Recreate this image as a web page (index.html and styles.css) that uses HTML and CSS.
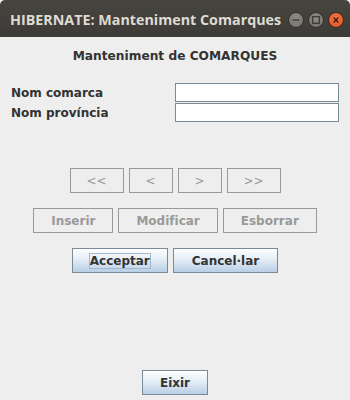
FILE: index.html
```html
<!DOCTYPE html>
<html lang="ca">
<head>
    <meta charset="UTF-8">
    <meta name="viewport" content="width=device-width,initial-scale=1.0">
    <title>HIBERNATE: Manteniment Comarques</title>
    <link rel="stylesheet" href="styles.css">
</head>
<body>
    <div class="window">

        <div class="titlebar">
            <span class="title">HIBERNATE: Manteniment Comarques</span>
            <div class="wmbuttons">
                <span class="wmbtn">
                    <svg width="14" height="14" viewBox="0 0 14 14"><line x1="3.5" y1="7" x2="10.5" y2="7" stroke="#3c3b37" stroke-width="1.4"/></svg>
                </span>
                <span class="wmbtn">
                    <svg width="14" height="14" viewBox="0 0 14 14"><rect x="3.7" y="3.7" width="6.6" height="6.6" fill="none" stroke="#3c3b37" stroke-width="1.3"/></svg>
                </span>
                <span class="wmbtn close">
                    <svg width="14" height="14" viewBox="0 0 14 14"><path d="M4.6 4.6 L9.4 9.4 M9.4 4.6 L4.6 9.4" stroke="#3c1a0e" stroke-width="1.4"/></svg>
                </span>
            </div>
        </div>

        <div class="content">
            <h1>Manteniment de COMARQUES</h1>

            <div class="form">
                <div class="formrow">
                    <label for="comarca">Nom comarca</label>
                    <input type="text" id="comarca">
                </div>
                <div class="formrow">
                    <label for="provincia">Nom província</label>
                    <input type="text" id="provincia">
                </div>
            </div>

            <div class="buttons nav">
                <button class="wide" disabled>&lt;&lt;</button>
                <button disabled>&lt;</button>
                <button disabled>&gt;</button>
                <button class="wide" disabled>&gt;&gt;</button>
            </div>

            <div class="buttons">
                <button disabled>Inserir</button>
                <button disabled>Modificar</button>
                <button disabled>Esborrar</button>
            </div>

            <div class="buttons">
                <button class="active focused"><span class="focus">Acceptar</span></button>
                <button class="active cancel">Cancel·lar</button>
            </div>

            <div class="buttons exit">
                <button class="active">Eixir</button>
            </div>
        </div>

    </div>
</body>
</html>
```

FILE: styles.css
```css
body{
    margin:0;
    background:#f4f4f4;
    font-family:"DejaVu Sans",Verdana,sans-serif;
}

.window{
    width:350px;
    height:400px;
    display:flex;
    flex-direction:column;
}

.titlebar{
    height:37px;
    flex-shrink:0;
    display:flex;
    align-items:center;
    justify-content:space-between;
    padding:0 7px 0 10px;
    background:linear-gradient(#46453f,#3c3b37);
    border-radius:5px 5px 0 0;
}

.title{
    color:#dfdbd2;
    font-family:"Open Sans",sans-serif;
    font-weight:bold;
    font-size:14.3px;
    margin-top:1px;
}

.wmbuttons{
    display:flex;
    gap:6px;
    margin-top:3px;
}

.wmbtn{
    width:14px;
    height:14px;
    border-radius:50%;
    background:radial-gradient(circle at 50% 35%,#8e8c86,#6f6d68);
    box-shadow:0 0 0 1px #35342f;
    display:flex;
}

.wmbtn.close{
    background:radial-gradient(circle at 50% 35%,#f27a4a,#df4a16);
    box-shadow:0 0 0 1px #3a2a22;
}

.content{
    flex:1;
    background:#eeeeee;
    display:flex;
    flex-direction:column;
    padding:12px 0 5px;
    color:#333333;
}

h1{
    margin:0;
    font-size:12.2px;
    line-height:15px;
    text-align:center;
}

.form{
    margin-top:19px;
    padding:0 11px 0 11px;
}

.formrow{
    display:flex;
    justify-content:space-between;
    height:20px;
}

.formrow label{
    font-size:12px;
    font-weight:bold;
    line-height:20px;
}

.formrow input{
    width:164px;
    height:19px;
    box-sizing:border-box;
    margin:0;
    border:1px solid #7a8a99;
    background:white;
    padding:0 3px;
}

.buttons{
    display:flex;
    justify-content:center;
    gap:5px;
    margin-top:15px;
}

.nav{
    margin-top:45px;
}

button{
    height:25px;
    box-sizing:border-box;
    padding:0 17px;
    font-family:"DejaVu Sans",Verdana,sans-serif;
    font-size:12px;
    font-weight:bold;
    border:1px solid #999999;
    background:#eeeeee;
    color:#999999;
}

.nav button{
    width:44px;
    padding:0;
    font-weight:normal;
}

.nav button.wide{
    width:54px;
}

button.active{
    border-color:#7a8a99;
    color:#333333;
    background:linear-gradient(#ffffff,#e4edf6 45%,#b8cfe5);
}

button.focused{
    padding:0 16px;
}

button.cancel{
    padding:0 18px;
}

.focus{
    border:1px solid #a3b8cc;
    padding:0;
}

.exit{
    margin-top:auto;
}
```
